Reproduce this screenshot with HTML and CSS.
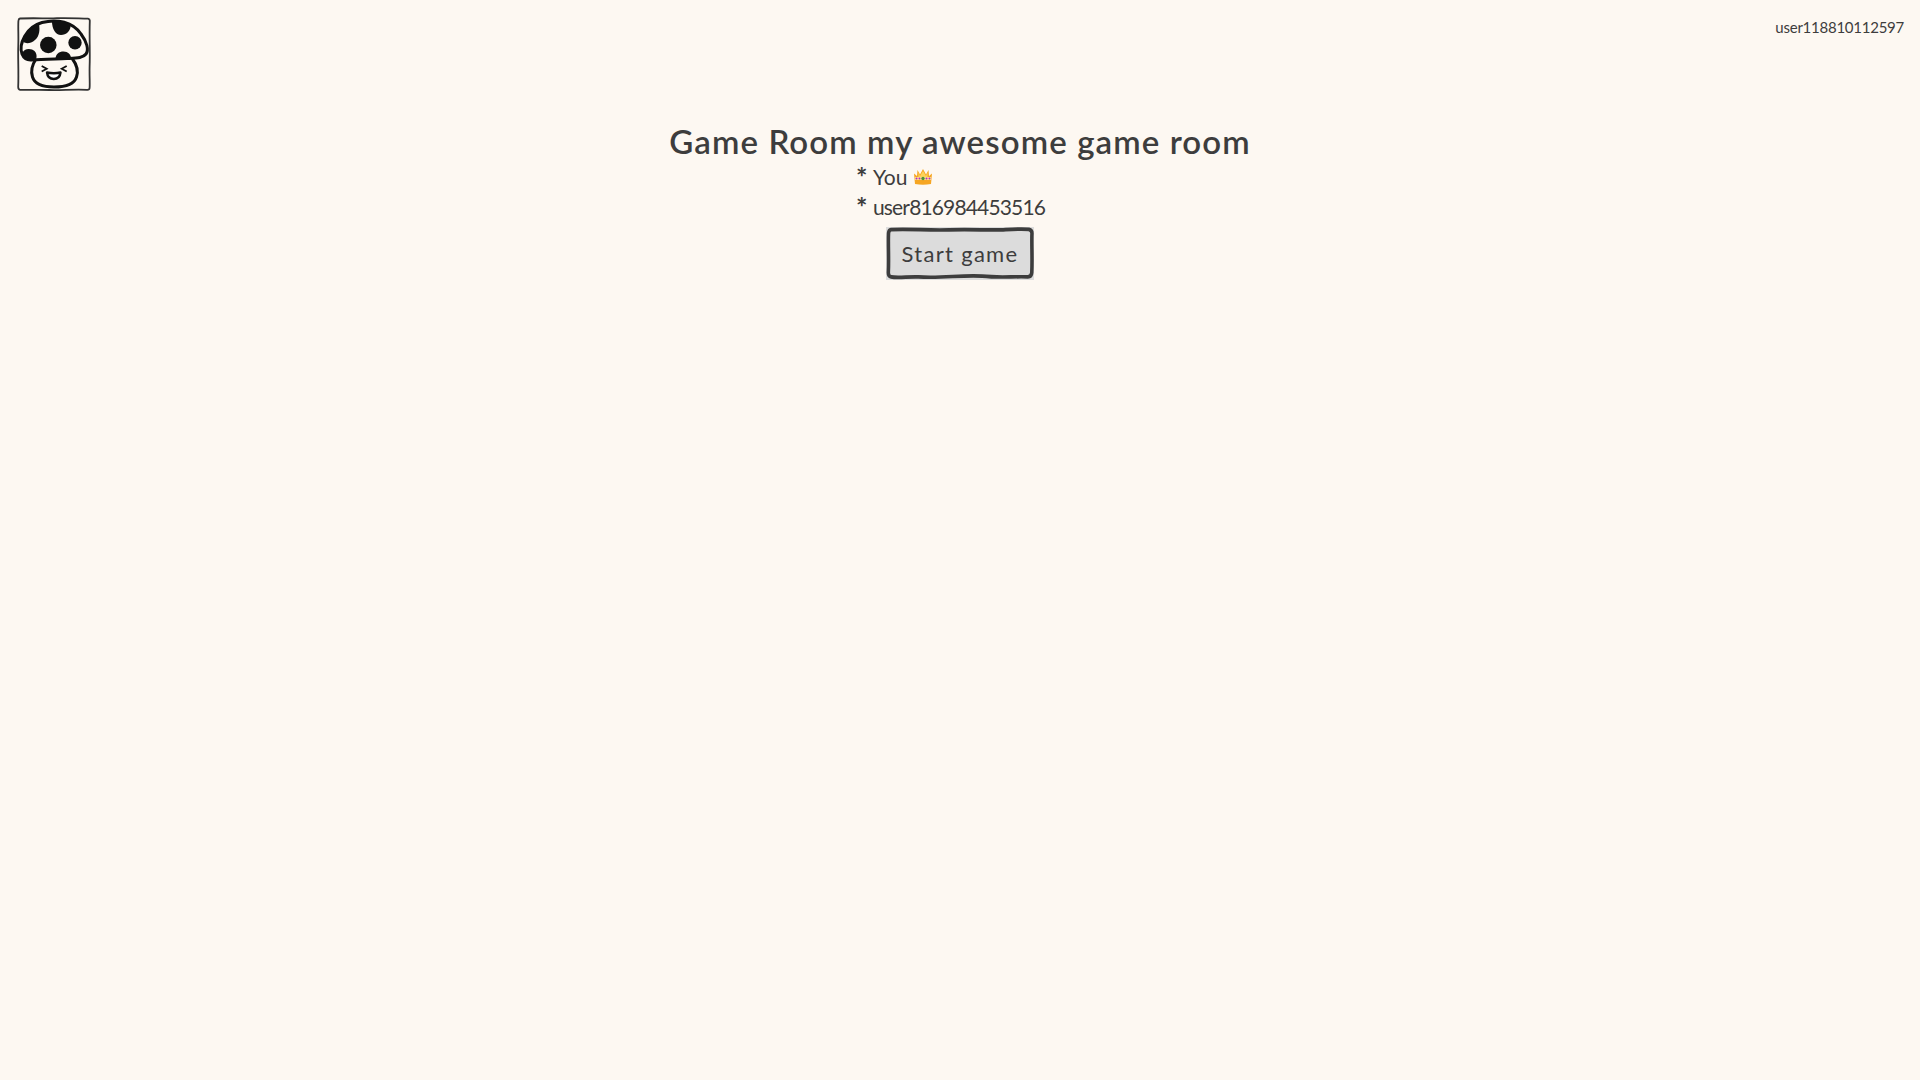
FILE: index.html
```html
<!DOCTYPE html>
<html lang="en">
<head>
<meta charset="utf-8">
<title>Game Room</title>
<link rel="stylesheet" href="styles.css">
</head>
<body>
<header class="topbar">
  <svg class="logo" viewBox="0 0 74 74" width="74" height="74" aria-label="Mushroom logo">
    <path class="frame" d="M3 1.500 C20 .8 30 1.800 40 1.200 C52 .8 62 1.500 71 1.600 Q73 2 72.800 4 C72.200 20 73.200 35 72.600 50 C72.400 60 73 66 72.600 71 Q72.400 73 70 72.800 C55 72.200 45 73.400 32 73 C20 72.600 10 73.200 3 72.800 Q1.200 72.600 1.200 70 C1.800 55 .8 40 1.300 28 C1.600 18 1 10 1.400 4 Q1.500 1.800 3 1.500 Z"/>
    <path class="stem" d="M19 42 C15 48 13.500 54 15.500 60 C18 68 27 70 37 70 C48 70 57 68 59.500 60 C61.500 54 60 48 55.500 42"/>
    <path class="cap" d="M5 37 C1.500 27 9 10 25 5.500 C40 1.500 56 5 64 17 C70 25 72 33 69 37 C66 41 60 41 50 41.500 C38 42 25 42 15 43 C10 43.500 7 42 5 37 Z"/>
    <path class="spot" d="M6.500 25 C8 17 14 10 22 7 C23 13 22.500 19 18 23 C14 26.500 9 27 6.500 25 Z"/>
    <path class="spot" d="M35 4.500 C42 3 48 4 53.500 8 C54 14 49 18 44 18 C38.500 18 35 12 35 4.500 Z"/>
    <circle class="spot" cx="31.300" cy="28" r="8.300"/>
    <circle class="spot" cx="58" cy="25.700" r="6.700"/>
    <path class="spot" d="M5.500 36 C6.500 32.500 11 31 15 32.500 C19 34 20.500 38 19 42.500 C14 43.500 8 43.500 5.500 36 Z"/>
    <path class="spot" d="M38.500 42 C38.500 37 42 34.500 46.500 34.500 C51 34.500 54 37.500 54 41.500 C48 42 43 42 38.500 42 Z"/>
    <path class="eye" d="M24.700 49 L29.700 51.800 L24.700 54.500 M49.700 49 L44.700 51.800 L49.700 54.500"/>
    <path class="mouth" d="M30 55.500 Q37 57 43.500 55.500 C43 60 40.500 62 36.800 62 C33 62 30.500 60 30 55.500 Z"/>
  </svg>
  <span class="username">user118810112597</span>
</header>
<main class="room">
  <h1 class="title">Game Room my awesome game room</h1>
  <ul class="players">
    <li class="player"><span class="star">*</span><span>You</span>
      <svg class="crown" viewBox="0 0 18 16" width="18" height="16" aria-label="crown">
        <path fill="#f6a623" d="M0 4.500 L3 7 L3.500 1 L6 5.500 L9 0 L12 5.500 L14.500 1 L15 7 L18 4.500 L17 15 Q9 16.500 1 15 Z"/>
        <path fill="#fdd35a" d="M4.500 3.500 L6 7 L9 2 L12 7 L13.500 3.500 L13.500 9 L4.500 9 Z"/>
        <rect x="0.800" y="8" width="16.400" height="3" fill="#fde08a"/>
        <circle cx="2.500" cy="9.500" r="1" fill="#b32bc6"/><circle cx="5.500" cy="9.500" r="1" fill="#b32bc6"/>
        <circle cx="9" cy="9.500" r="1.700" fill="#4e8f3a"/>
        <circle cx="12.500" cy="9.500" r="1" fill="#b32bc6"/><circle cx="15.500" cy="9.500" r="1" fill="#b32bc6"/>
      </svg>
    </li>
    <li class="player"><span class="star">*</span><span class="player-id">user816984453516</span></li>
  </ul>
  <button class="start" type="button">
    <svg class="start-border" viewBox="0 0 146 51" preserveAspectRatio="none" aria-hidden="true">
      <path d="M5 2.500 C25 1.500 40 3.500 62 2.800 C85 2 105 3.500 118 2.500 C128 2 136 1.800 141 2.300 Q144 3 144 6 C143.500 15 144.500 30 143.800 44 Q143.500 48 140 48 C125 47.500 112 49 95 47.300 C75 46 55 49.500 32 48 C22 47.500 12 49.500 5 48 Q2.300 47.500 2.300 44 C3 30 2 18 2.500 6 Q2.800 2.800 5 2.500 Z"/>
    </svg>
    <span class="start-label">Start game</span>
  </button>
</main>
</body>
</html>
```
FILE: styles.css
```css
* { box-sizing: border-box; }
html, body { margin: 0; height: 100%; }
body {
  background: #fdf8f2;
  color: #3d3d3d;
  font-family: "Lato", "Noto Sans", sans-serif;
}
.topbar {
  display: flex;
  justify-content: space-between;
  align-items: flex-start;
  padding: 17px 16px 0 17px;
}
.logo { display: block; }
.frame { fill: #fdf8f2; stroke: #333; stroke-width: 1.800; }
.cap { fill: #fdf8f2; stroke: #111; stroke-width: 3; stroke-linejoin: round; }
.spot { fill: #111; }
.stem { fill: #fdf8f2; stroke: #111; stroke-width: 3; stroke-linecap: round; }
.eye { fill: none; stroke: #111; stroke-width: 1.800; }
.mouth { fill: #fff; stroke: #111; stroke-width: 2.400; stroke-linejoin: round; }
.username { font-size: 15px; line-height: 20px; letter-spacing: -.25px; }
.room {
  display: flex;
  flex-direction: column;
  align-items: center;
  margin-top: 31px;
}
.title { margin: 0; font-size: 33px; line-height: 38px; font-weight: 600; letter-spacing: 1.100px; white-space: nowrap; }
.players { list-style: none; margin: 2px 0 0; padding: 0; width: 208px; }
.player { font-size: 21px; line-height: 29.500px; display: flex; align-items: center; white-space: nowrap; }
.star { width: 17px; font-size: 27px; font-weight: 700; }
.player-id { letter-spacing: -.85px; }
.crown { display: block; margin-left: 7px; }
.start {
  position: relative;
  width: 148px;
  height: 53px;
  margin-top: 6px;
  padding: 0;
  border: 0;
  background: #dcdcdc;
  color: #3d3d3d;
  font: inherit;
  font-size: 22px;
}
.start-border { position: absolute; inset: 0; width: 100%; height: 100%; }
.start-border path { fill: none; stroke: #3d3d3d; stroke-width: 3.500; }
.start-label { position: relative; letter-spacing: 1.300px; }
```
